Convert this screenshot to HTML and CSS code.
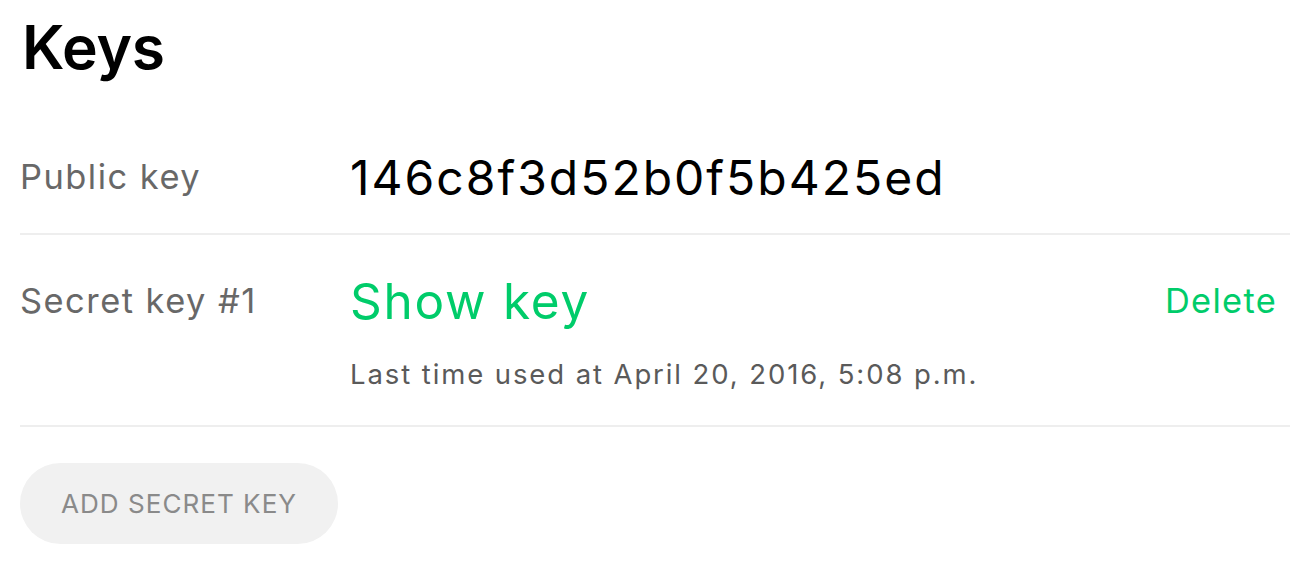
FILE: index.html
```html
<!DOCTYPE html>
<html>
<head>
<meta charset="utf-8">
<link rel="stylesheet" href="styles.css">
</head>
<body>
<div class="page">
  <h1 class="title">Keys</h1>
  <div class="row row-public">
    <div class="label">Public key</div>
    <div class="value">146c8f3d52b0f5b425ed</div>
  </div>
  <div class="row row-secret">
    <div class="label label-secret">Secret key #1</div>
    <div class="secret-main">
      <div class="secret-top">
        <a class="show-key">Show key</a>
        <a class="delete">Delete</a>
      </div>
      <div class="last-used">Last time used at April 20, 2016, 5:08 p.m.</div>
    </div>
  </div>
  <button class="add-btn">ADD SECRET KEY</button>
</div>
</body>
</html>
```
FILE: styles.css
```css
html, body {
  margin: 0;
  padding: 0;
  background: #fff;
}
body {
  font-family: Inter, "Open Sans", sans-serif;
}
.page {
  width: 1270px;
  padding: 0 20px;
}
.title {
  margin: 0;
  padding: 17px 0 0 2px;
  font-size: 60.5px;
  font-weight: 600;
  letter-spacing: -0.2px;
  line-height: 1;
  color: #000;
}
.row {
  display: flex;
  border-bottom: 2px solid #eeeeee;
}
.label {
  width: 330px;
  flex: none;
  font-size: 34.4px;
  line-height: 1;
  letter-spacing: 1.5px;
  color: #686868;
}
.row-public {
  align-items: center;
  padding: 76px 0 31px;
}
.value {
  font-size: 48px;
  line-height: 1;
  letter-spacing: 2px;
  color: #000;
}
.row-secret {
  align-items: flex-start;
  padding: 42px 0 37px;
}
.label-secret {
  margin-top: 7.5px;
}
.secret-main {
  flex: 1;
}
.secret-top {
  display: flex;
  justify-content: space-between;
  align-items: center;
  padding-right: 13px;
}
.show-key {
  font-size: 49.5px;
  line-height: 1;
  letter-spacing: 1.75px;
  color: #00cc6a;
}
.delete {
  font-size: 34.4px;
  line-height: 1;
  letter-spacing: 1.3px;
  color: #00cc6a;
}
.last-used {
  margin-top: 34.5px;
  font-size: 27.5px;
  line-height: 1;
  letter-spacing: 1.9px;
  color: #5a5a5a;
}
.add-btn {
  display: block;
  margin-top: 36px;
  width: 318px;
  height: 81px;
  border: none;
  border-radius: 41px;
  background: #f1f1f1;
  color: #8a8a8a;
  font-family: Inter, "Open Sans", sans-serif;
  font-size: 26.1px;
  letter-spacing: 1px;
  line-height: 1;
  padding: 2px 0 0;
}
```
